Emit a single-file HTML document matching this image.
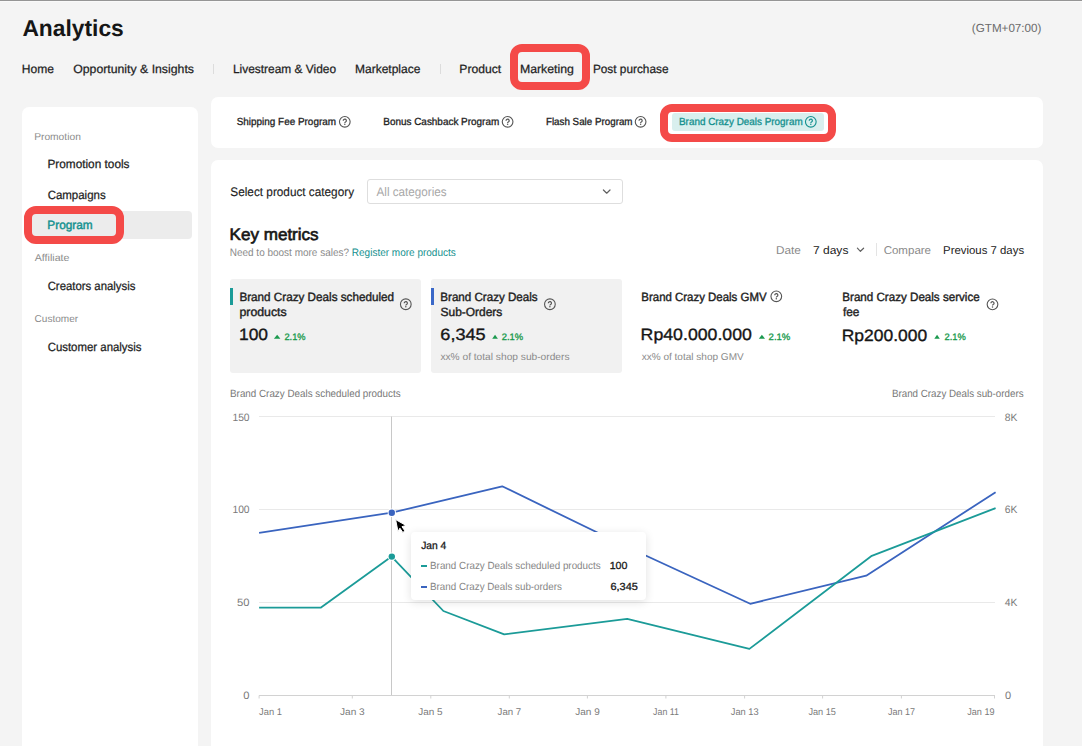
<!DOCTYPE html>
<html><head><meta charset="utf-8">
<style>
html,body{margin:0;padding:0;}
body{width:1082px;height:746px;overflow:hidden;background:#f4f4f4;position:relative;font-family:"Liberation Sans",sans-serif;}
.tx{position:absolute;white-space:nowrap;line-height:1;text-rendering:geometricPrecision;}
.abs{position:absolute;}
.card{position:absolute;background:#fff;border-radius:7px;}
.red{position:absolute;border:8px solid #f44a48;box-sizing:border-box;}
.q{position:absolute;box-sizing:border-box;border:1.1px solid #555;border-radius:50%;}
</style></head><body>
<div class="abs" style="left:0;top:0;width:1082px;height:1px;background:#959595"></div><div class="abs" style="left:0;top:1px;width:1082px;height:1px;background:#f9f9f9"></div>
<!-- nav dividers -->
<div class="abs" style="left:213px;top:64px;width:1px;height:10px;background:#dcdcdc"></div>
<div class="abs" style="left:439.5px;top:64px;width:1px;height:10px;background:#dcdcdc"></div>
<!-- sidebar -->
<div class="card" style="left:22px;top:107px;width:176px;height:700px;"></div>
<div class="abs" style="left:29px;top:210.6px;width:162.5px;height:28.5px;background:#ececec;border-radius:4px"></div>
<!-- tabs card -->
<div class="card" style="left:211px;top:96.5px;width:831.5px;height:51px;"></div>
<div class="abs" style="left:672.2px;top:113px;width:151.6px;height:18px;background:#d9efee;border-radius:3px"></div>
<!-- main card -->
<div class="card" style="left:211px;top:160.2px;width:831.5px;height:700px;"></div>
<!-- select -->
<div class="abs" style="left:366.9px;top:179.1px;width:255.9px;height:25px;box-sizing:border-box;border:1px solid #dedede;border-radius:3px"></div>
<svg class="abs" style="left:600px;top:186px" width="14" height="10" viewBox="0 0 14 10"><path d="M3.4 4.0 L6.7 7.2 L10 4.0" fill="none" stroke="#606060" stroke-width="1.2" stroke-linecap="round" stroke-linejoin="round"/></svg>
<!-- date chevron & divider -->
<svg class="abs" style="left:854px;top:245px" width="14" height="10" viewBox="0 0 14 10"><path d="M3.4 3.2 L6.4 6.3 L9.6 3.2" fill="none" stroke="#606060" stroke-width="1.2" stroke-linecap="round" stroke-linejoin="round"/></svg>
<div class="abs" style="left:876.4px;top:243.2px;width:1.1px;height:13px;background:#e4e4e4"></div>
<!-- metric cards -->
<div class="abs" style="left:229.8px;top:278.7px;width:191.5px;height:94px;background:#f1f1f1;border-radius:3px"></div>
<div class="abs" style="left:430.8px;top:278.7px;width:191.1px;height:94px;background:#f1f1f1;border-radius:3px"></div>
<div class="abs" style="left:230.2px;top:287.9px;width:3.2px;height:16.7px;background:#1b9b98"></div>
<div class="abs" style="left:430.8px;top:287.9px;width:3px;height:16.7px;background:#3a68c8"></div>
<!-- triangles -->
<svg class="abs" style="left:0;top:0;overflow:visible" width="1082" height="746">
 <g fill="#1c9a4f">
  <path d="M273.9 338.7 L277.15 334.7 L280.4 338.7Z"/>
  <path d="M492.2 338.7 L495.05 334.7 L497.9 338.7Z"/>
  <path d="M758.8 338.7 L761.9 334.7 L765 338.7Z"/>
  <path d="M934.3 338.7 L937.05 334.7 L939.8 338.7Z"/>
 </g>
</svg>
<!-- question icons -->
<svg class="abs" style="left:0;top:0;overflow:visible" width="1082" height="746">
 <defs>
  <g id="qi"><circle cx="0" cy="0" r="5.35" fill="none" stroke-width="1.1"/><path d="M-1.55 -1.1 A1.55 1.55 0 1 1 1.34 -0.33 Q0 0.3 0 1.2" fill="none" stroke-width="1.2"/><circle cx="0" cy="2.55" r="0.75" stroke="none"/></g>
 </defs>
 <use href="#qi" x="344.8" y="121.8" stroke="#555" fill="#555"/>
 <use href="#qi" x="507.6" y="121.8" stroke="#555" fill="#555"/>
 <use href="#qi" x="640.6" y="121.8" stroke="#555" fill="#555"/>
 <use href="#qi" x="810.8" y="121.8" stroke="#13908e" fill="#13908e"/>
 <use href="#qi" x="405.8" y="304.25" stroke="#555" fill="#555"/>
 <use href="#qi" x="549.9" y="304.25" stroke="#555" fill="#555"/>
 <use href="#qi" x="776.3" y="296.3" stroke="#555" fill="#555"/>
 <use href="#qi" x="992.5" y="304.35" stroke="#555" fill="#555"/>
</svg>
<!-- chart -->
<svg class="abs" style="left:0;top:0" width="1082" height="746">
 <g stroke="#e9e9e9" stroke-width="1">
  <line x1="259" y1="416.5" x2="995" y2="416.5"/>
  <line x1="259" y1="509.5" x2="995" y2="509.5"/>
  <line x1="259" y1="602.5" x2="995" y2="602.5"/>
 </g>
 <line x1="259" y1="695.5" x2="995" y2="695.5" stroke="#d2d2d2" stroke-width="1"/>
 <g stroke="#d2d2d2" stroke-width="1">
  <line x1="259.1" y1="695.5" x2="259.1" y2="698.5"/><line x1="352.3" y1="695.5" x2="352.3" y2="698.5"/>
  <line x1="430.8" y1="695.5" x2="430.8" y2="698.5"/><line x1="509.3" y1="695.5" x2="509.3" y2="698.5"/>
  <line x1="587.4" y1="695.5" x2="587.4" y2="698.5"/><line x1="665.9" y1="695.5" x2="665.9" y2="698.5"/>
  <line x1="744.6" y1="695.5" x2="744.6" y2="698.5"/><line x1="822.6" y1="695.5" x2="822.6" y2="698.5"/>
  <line x1="901.4" y1="695.5" x2="901.4" y2="698.5"/><line x1="994.5" y1="695.5" x2="994.5" y2="698.5"/>
 </g>
 <line x1="391.5" y1="416.5" x2="391.5" y2="695" stroke="#c8c8c8" stroke-width="1"/>
 <polyline fill="none" stroke="#3a64bf" stroke-width="1.8" stroke-linejoin="round" points="259.1,532.8 391.7,512.7 502.2,486.3 627.2,547 750.2,603.8 866.2,575.7 995.6,492.2"/>
 <polyline fill="none" stroke="#1b9b98" stroke-width="1.8" stroke-linejoin="round" points="259.1,607.6 321,607.6 391.6,556.6 443.4,611 504.2,634.3 627.2,618.8 749.4,648.9 871.8,555.8 995.6,508.1"/>
 <circle cx="391.8" cy="512.7" r="4.2" fill="#fff"/>
 <circle cx="391.8" cy="512.7" r="3.2" fill="#3a64bf"/>
 <circle cx="391.8" cy="556.6" r="4.2" fill="#fff"/>
 <circle cx="391.8" cy="556.6" r="3.2" fill="#1b9b98"/>
</svg>
<!-- tooltip -->
<div class="abs" style="left:411px;top:532px;width:235px;height:68px;background:#fff;border-radius:4px;box-shadow:0 2px 10px rgba(0,0,0,0.12)"></div>
<div class="abs" style="left:420.6px;top:565.3px;width:6px;height:2px;background:#1b9b98"></div>
<div class="abs" style="left:420.6px;top:586px;width:6px;height:2px;background:#3a64bf"></div>
<!-- cursor -->
<svg class="abs" style="left:0;top:0" width="1082" height="746">
 <path d="M395.6 519.6 L406 525.4 L402 526.7 L405 531 L402.8 532.4 L399.9 528.2 L398 531.6 Z" fill="#000" stroke="#fff" stroke-width="1" stroke-linejoin="round"/>
</svg>
<!-- red highlight boxes -->
<div class="red" style="left:510px;top:44px;width:80px;height:46px;border-radius:12px"></div>
<div class="red" style="left:24px;top:206px;width:100.2px;height:37.7px;border-radius:12px"></div>
<div class="red" style="left:660.2px;top:103.9px;width:175.6px;height:37.7px;border-radius:12px"></div>
<svg class='abs' style='left:0;top:0' width='1082' height='746' font-family='Liberation Sans, sans-serif' text-rendering='geometricPrecision'>
<text id='t0' x='22.42' y='35.60' font-size='23' font-weight='700' fill='#161616' text-anchor='start' textLength='101.34' lengthAdjust='spacingAndGlyphs'>Analytics</text>
<text id='t1' x='21.88' y='73.00' font-size='12' font-weight='400' fill='#1f1f1f' text-anchor='start' stroke='#1f1f1f' stroke-width='0.25' textLength='32.20' lengthAdjust='spacingAndGlyphs'>Home</text>
<text id='t2' x='73.20' y='73.00' font-size='12' font-weight='400' fill='#1f1f1f' text-anchor='start' stroke='#1f1f1f' stroke-width='0.25' textLength='120.74' lengthAdjust='spacingAndGlyphs'>Opportunity &amp; Insights</text>
<text id='t3' x='232.95' y='73.00' font-size='12' font-weight='400' fill='#1f1f1f' text-anchor='start' stroke='#1f1f1f' stroke-width='0.25' textLength='103.09' lengthAdjust='spacingAndGlyphs'>Livestream &amp; Video</text>
<text id='t4' x='355.04' y='73.00' font-size='12' font-weight='400' fill='#1f1f1f' text-anchor='start' stroke='#1f1f1f' stroke-width='0.25' textLength='65.33' lengthAdjust='spacingAndGlyphs'>Marketplace</text>
<text id='t5' x='459.31' y='73.00' font-size='12' font-weight='400' fill='#1f1f1f' text-anchor='start' stroke='#1f1f1f' stroke-width='0.25' textLength='41.89' lengthAdjust='spacingAndGlyphs'>Product</text>
<text id='t6' x='519.90' y='73.00' font-size='12' font-weight='400' fill='#1f1f1f' text-anchor='start' stroke='#1f1f1f' stroke-width='0.25' textLength='54.01' lengthAdjust='spacingAndGlyphs'>Marketing</text>
<text id='t7' x='592.92' y='73.00' font-size='12' font-weight='400' fill='#1f1f1f' text-anchor='start' stroke='#1f1f1f' stroke-width='0.25' textLength='75.57' lengthAdjust='spacingAndGlyphs'>Post purchase</text>
<text id='t8' x='971.84' y='31.70' font-size='11.8' font-weight='400' fill='#6b6b6b' text-anchor='start' textLength='69.59' lengthAdjust='spacingAndGlyphs'>(GTM+07:00)</text>
<text id='t9' x='34.17' y='139.60' font-size='10' font-weight='400' fill='#8c8c8c' text-anchor='start' textLength='46.67' lengthAdjust='spacingAndGlyphs'>Promotion</text>
<text id='t10' x='34.72' y='261.20' font-size='10' font-weight='400' fill='#8c8c8c' text-anchor='start' textLength='34.73' lengthAdjust='spacingAndGlyphs'>Affiliate</text>
<text id='t11' x='34.62' y='321.70' font-size='10' font-weight='400' fill='#8c8c8c' text-anchor='start' textLength='43.53' lengthAdjust='spacingAndGlyphs'>Customer</text>
<text id='t12' x='47.43' y='168.20' font-size='12' font-weight='400' fill='#222' text-anchor='start' stroke='#222' stroke-width='0.25' textLength='82.06' lengthAdjust='spacingAndGlyphs'>Promotion tools</text>
<text id='t13' x='47.65' y='198.90' font-size='12' font-weight='400' fill='#222' text-anchor='start' stroke='#222' stroke-width='0.25' textLength='58.01' lengthAdjust='spacingAndGlyphs'>Campaigns</text>
<text id='t14' x='47.36' y='229.10' font-size='12' font-weight='400' fill='#13918f' text-anchor='start' stroke='#13918f' stroke-width='0.45' textLength='45.35' lengthAdjust='spacingAndGlyphs'>Program</text>
<text id='t15' x='47.67' y='290.10' font-size='12' font-weight='400' fill='#222' text-anchor='start' stroke='#222' stroke-width='0.25' textLength='87.76' lengthAdjust='spacingAndGlyphs'>Creators analysis</text>
<text id='t16' x='47.65' y='350.80' font-size='12' font-weight='400' fill='#222' text-anchor='start' stroke='#222' stroke-width='0.25' textLength='93.88' lengthAdjust='spacingAndGlyphs'>Customer analysis</text>
<text id='t17' x='236.74' y='125.10' font-size='10.3' font-weight='400' fill='#222' text-anchor='start' stroke='#222' stroke-width='0.3' textLength='99.26' lengthAdjust='spacingAndGlyphs'>Shipping Fee Program</text>
<text id='t18' x='383.25' y='125.10' font-size='10.3' font-weight='400' fill='#222' text-anchor='start' stroke='#222' stroke-width='0.3' textLength='115.97' lengthAdjust='spacingAndGlyphs'>Bonus Cashback Program</text>
<text id='t19' x='545.91' y='125.10' font-size='10.3' font-weight='400' fill='#222' text-anchor='start' stroke='#222' stroke-width='0.3' textLength='86.62' lengthAdjust='spacingAndGlyphs'>Flash Sale Program</text>
<text id='t20' x='679.01' y='125.10' font-size='10.3' font-weight='400' fill='#13908e' text-anchor='start' stroke='#13908e' stroke-width='0.3' textLength='123.62' lengthAdjust='spacingAndGlyphs'>Brand Crazy Deals Program</text>
<text id='t21' x='230.35' y='195.90' font-size='12.4' font-weight='400' fill='#222' text-anchor='start' stroke='#222' stroke-width='0.15' textLength='123.68' lengthAdjust='spacingAndGlyphs'>Select product category</text>
<text id='t22' x='376.58' y='195.90' font-size='12.4' font-weight='400' fill='#a8a8a8' text-anchor='start' textLength='70.04' lengthAdjust='spacingAndGlyphs'>All categories</text>
<text id='t23' x='229.54' y='239.90' font-size='16.8' font-weight='400' fill='#161616' text-anchor='start' stroke='#161616' stroke-width='0.65' textLength='89.13' lengthAdjust='spacingAndGlyphs'>Key metrics</text>
<text id='t24' x='229.74' y='255.90' font-size='10.8' font-weight='400' fill='#8a8a8a' text-anchor='start' textLength='119.26' lengthAdjust='spacingAndGlyphs'>Need to boost more sales?</text>
<text id='t25' x='351.85' y='255.90' font-size='10.8' font-weight='400' fill='#13908e' text-anchor='start' textLength='103.91' lengthAdjust='spacingAndGlyphs'>Register more products</text>
<text id='t26' x='776.06' y='253.70' font-size='11.3' font-weight='400' fill='#8a8a8a' text-anchor='start' textLength='24.82' lengthAdjust='spacingAndGlyphs'>Date</text>
<text id='t27' x='812.95' y='253.70' font-size='11.3' font-weight='400' fill='#222' text-anchor='start' textLength='35.47' lengthAdjust='spacingAndGlyphs'>7 days</text>
<text id='t28' x='883.65' y='253.70' font-size='11.3' font-weight='400' fill='#8a8a8a' text-anchor='start' textLength='47.40' lengthAdjust='spacingAndGlyphs'>Compare</text>
<text id='t29' x='943.06' y='253.70' font-size='11.3' font-weight='400' fill='#222' text-anchor='start' textLength='81.05' lengthAdjust='spacingAndGlyphs'>Previous 7 days</text>
<text id='t30' x='239.41' y='300.60' font-size='12' font-weight='400' fill='#222' text-anchor='start' stroke='#222' stroke-width='0.4' textLength='154.60' lengthAdjust='spacingAndGlyphs'>Brand Crazy Deals scheduled</text>
<text id='t31' x='239.44' y='316.10' font-size='12' font-weight='400' fill='#222' text-anchor='start' stroke='#222' stroke-width='0.4' textLength='47.27' lengthAdjust='spacingAndGlyphs'>products</text>
<text id='t32' x='440.29' y='300.60' font-size='12' font-weight='400' fill='#222' text-anchor='start' stroke='#222' stroke-width='0.4' textLength='97.37' lengthAdjust='spacingAndGlyphs'>Brand Crazy Deals</text>
<text id='t33' x='440.52' y='316.10' font-size='12' font-weight='400' fill='#222' text-anchor='start' stroke='#222' stroke-width='0.4' textLength='61.83' lengthAdjust='spacingAndGlyphs'>Sub-Orders</text>
<text id='t34' x='641.36' y='300.60' font-size='12' font-weight='400' fill='#222' text-anchor='start' stroke='#222' stroke-width='0.4' textLength='125.20' lengthAdjust='spacingAndGlyphs'>Brand Crazy Deals GMV</text>
<text id='t35' x='842.32' y='300.60' font-size='12' font-weight='400' fill='#222' text-anchor='start' stroke='#222' stroke-width='0.4' textLength='137.33' lengthAdjust='spacingAndGlyphs'>Brand Crazy Deals service</text>
<text id='t36' x='842.95' y='316.10' font-size='12' font-weight='400' fill='#222' text-anchor='start' stroke='#222' stroke-width='0.4' textLength='16.45' lengthAdjust='spacingAndGlyphs'>fee</text>
<text id='t37' x='239.01' y='340.30' font-size='16.4' font-weight='400' fill='#161616' text-anchor='start' stroke='#161616' stroke-width='0.35' textLength='29.06' lengthAdjust='spacingAndGlyphs'>100</text>
<text id='t38' x='440.34' y='340.30' font-size='16.4' font-weight='400' fill='#161616' text-anchor='start' stroke='#161616' stroke-width='0.35' textLength='45.40' lengthAdjust='spacingAndGlyphs'>6,345</text>
<text id='t39' x='640.63' y='340.30' font-size='16.4' font-weight='400' fill='#161616' text-anchor='start' stroke='#161616' stroke-width='0.35' textLength='111.32' lengthAdjust='spacingAndGlyphs'>Rp40.000.000</text>
<text id='t40' x='841.69' y='340.50' font-size='16.4' font-weight='400' fill='#161616' text-anchor='start' stroke='#161616' stroke-width='0.35' textLength='85.48' lengthAdjust='spacingAndGlyphs'>Rp200.000</text>
<text id='t41' x='284.46' y='339.90' font-size='9.4' font-weight='400' fill='#17994b' text-anchor='start' stroke='#17994b' stroke-width='0.3' textLength='21.19' lengthAdjust='spacingAndGlyphs'>2.1%</text>
<text id='t42' x='501.74' y='339.90' font-size='9.4' font-weight='400' fill='#17994b' text-anchor='start' stroke='#17994b' stroke-width='0.3' textLength='21.53' lengthAdjust='spacingAndGlyphs'>2.1%</text>
<text id='t43' x='768.56' y='339.90' font-size='9.4' font-weight='400' fill='#17994b' text-anchor='start' stroke='#17994b' stroke-width='0.3' textLength='21.85' lengthAdjust='spacingAndGlyphs'>2.1%</text>
<text id='t44' x='944.46' y='339.90' font-size='9.4' font-weight='400' fill='#17994b' text-anchor='start' stroke='#17994b' stroke-width='0.3' textLength='21.34' lengthAdjust='spacingAndGlyphs'>2.1%</text>
<text id='t45' x='440.40' y='359.60' font-size='10' font-weight='400' fill='#8a8a8a' text-anchor='start' textLength='129.10' lengthAdjust='spacingAndGlyphs'>xx% of total shop sub-orders</text>
<text id='t46' x='641.71' y='359.60' font-size='10' font-weight='400' fill='#8a8a8a' text-anchor='start' textLength='102.01' lengthAdjust='spacingAndGlyphs'>xx% of total shop GMV</text>
<text id='t47' x='230.06' y='396.70' font-size='10.5' font-weight='400' fill='#777' text-anchor='start' textLength='170.53' lengthAdjust='spacingAndGlyphs'>Brand Crazy Deals scheduled products</text>
<text id='t48' x='1023.59' y='396.70' font-size='10.5' font-weight='400' fill='#777' text-anchor='end' textLength='131.69' lengthAdjust='spacingAndGlyphs'>Brand Crazy Deals sub-orders</text>
<text id='t49' x='249.57' y='420.60' font-size='10.6' font-weight='400' fill='#7a7a7a' text-anchor='end' textLength='17.14' lengthAdjust='spacingAndGlyphs'>150</text>
<text id='t50' x='249.57' y='513.40' font-size='10.6' font-weight='400' fill='#7a7a7a' text-anchor='end' textLength='17.14' lengthAdjust='spacingAndGlyphs'>100</text>
<text id='t51' x='249.62' y='606.20' font-size='10.6' font-weight='400' fill='#7a7a7a' text-anchor='end' textLength='12.50' lengthAdjust='spacingAndGlyphs'>50</text>
<text id='t52' x='249.62' y='698.80' font-size='10.6' font-weight='400' fill='#7a7a7a' text-anchor='end' textLength='6.23' lengthAdjust='spacingAndGlyphs'>0</text>
<text id='t53' x='1004.84' y='420.60' font-size='10.6' font-weight='400' fill='#7a7a7a' text-anchor='start' textLength='12.61' lengthAdjust='spacingAndGlyphs'>8K</text>
<text id='t54' x='1004.85' y='513.40' font-size='10.6' font-weight='400' fill='#7a7a7a' text-anchor='start' textLength='12.61' lengthAdjust='spacingAndGlyphs'>6K</text>
<text id='t55' x='1004.86' y='606.20' font-size='10.6' font-weight='400' fill='#7a7a7a' text-anchor='start' textLength='12.62' lengthAdjust='spacingAndGlyphs'>4K</text>
<text id='t56' x='1004.93' y='698.80' font-size='10.6' font-weight='400' fill='#7a7a7a' text-anchor='start' textLength='6.16' lengthAdjust='spacingAndGlyphs'>0</text>
<text id='t57' x='259.06' y='714.80' font-size='9.7' font-weight='400' fill='#7a7a7a' text-anchor='start' textLength='22.81' lengthAdjust='spacingAndGlyphs'>Jan 1</text>
<text id='t58' x='352.35' y='714.80' font-size='9.7' font-weight='400' fill='#7a7a7a' text-anchor='middle' textLength='24.71' lengthAdjust='spacingAndGlyphs'>Jan 3</text>
<text id='t59' x='430.44' y='714.80' font-size='9.7' font-weight='400' fill='#7a7a7a' text-anchor='middle' textLength='24.29' lengthAdjust='spacingAndGlyphs'>Jan 5</text>
<text id='t60' x='509.39' y='714.80' font-size='9.7' font-weight='400' fill='#7a7a7a' text-anchor='middle' textLength='23.61' lengthAdjust='spacingAndGlyphs'>Jan 7</text>
<text id='t61' x='587.55' y='714.80' font-size='9.7' font-weight='400' fill='#7a7a7a' text-anchor='middle' textLength='24.51' lengthAdjust='spacingAndGlyphs'>Jan 9</text>
<text id='t62' x='665.98' y='714.80' font-size='9.7' font-weight='400' fill='#7a7a7a' text-anchor='middle' textLength='25.76' lengthAdjust='spacingAndGlyphs'>Jan 11</text>
<text id='t63' x='744.73' y='714.80' font-size='9.7' font-weight='400' fill='#7a7a7a' text-anchor='middle' textLength='27.88' lengthAdjust='spacingAndGlyphs'>Jan 13</text>
<text id='t64' x='822.20' y='714.80' font-size='9.7' font-weight='400' fill='#7a7a7a' text-anchor='middle' textLength='27.57' lengthAdjust='spacingAndGlyphs'>Jan 15</text>
<text id='t65' x='901.43' y='714.80' font-size='9.7' font-weight='400' fill='#7a7a7a' text-anchor='middle' textLength='27.10' lengthAdjust='spacingAndGlyphs'>Jan 17</text>
<text id='t66' x='994.56' y='714.80' font-size='9.7' font-weight='400' fill='#7a7a7a' text-anchor='end' textLength='27.31' lengthAdjust='spacingAndGlyphs'>Jan 19</text>
<text id='t67' x='421.14' y='548.80' font-size='10.5' font-weight='400' fill='#161616' text-anchor='start' stroke='#161616' stroke-width='0.3' textLength='25.13' lengthAdjust='spacingAndGlyphs'>Jan 4</text>
<text id='t68' x='430.07' y='569.20' font-size='10.4' font-weight='400' fill='#858585' text-anchor='start' textLength='170.56' lengthAdjust='spacingAndGlyphs'>Brand Crazy Deals scheduled products</text>
<text id='t69' x='430.07' y='590.20' font-size='10.4' font-weight='400' fill='#858585' text-anchor='start' textLength='131.83' lengthAdjust='spacingAndGlyphs'>Brand Crazy Deals sub-orders</text>
<text id='t70' x='609.69' y='569.20' font-size='10.3' font-weight='400' fill='#161616' text-anchor='start' stroke='#161616' stroke-width='0.3' textLength='17.78' lengthAdjust='spacingAndGlyphs'>100</text>
<text id='t71' x='610.47' y='590.20' font-size='10.3' font-weight='400' fill='#161616' text-anchor='start' stroke='#161616' stroke-width='0.3' textLength='27.33' lengthAdjust='spacingAndGlyphs'>6,345</text>
</svg>
</body></html>
